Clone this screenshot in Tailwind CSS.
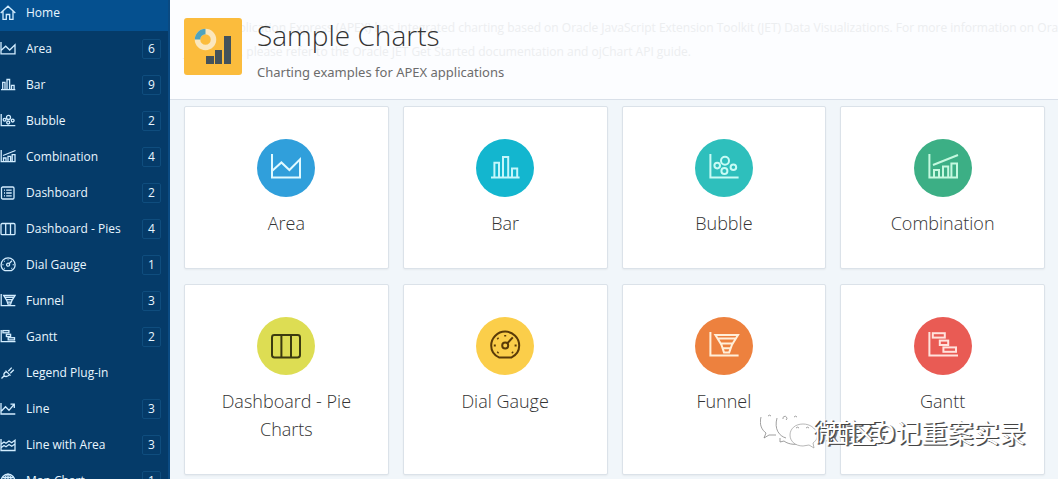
<!DOCTYPE html>
<html lang="en">
<head>
<meta charset="utf-8">
<title>Sample Charts</title>
<script src="https://cdn.jsdelivr.net/npm/@tailwindcss/browser@4"></script>
</head>
<body class="flex h-screen overflow-hidden bg-[#f1f6fa] font-['Open_Sans','Noto_Sans_CJK_SC',sans-serif] text-[#333]">

<!-- Icon set, drawn on a 16-unit grid -->
<svg class="hidden">
  <symbol id="home" viewBox="0 0 16 16"><path d="M.7 8 8 1.2 15.3 8M3 6.2v8.1h3.3V9.5h3.4v4.8H13V6.2"/></symbol>
  <symbol id="area" viewBox="0 0 16 16"><path d="M1 1v11.8h14V3.7L9.7 9l-4-3.8L1 9.5"/></symbol>
  <symbol id="bar" viewBox="0 0 16 16"><path d="M1 12.7h14.3M2.7 12.7V5.4H5v7.3M7 12.7V2.5h2.6v10.2M11.5 12.7V8.3h2.6v4.4"/></symbol>
  <symbol id="bubble" viewBox="0 0 16 16"><path d="M1.2 1v11.7h14.1"/><circle cx="4.6" cy="6.8" r="1.4"/><circle cx="8.5" cy="4.4" r="2"/><circle cx="12.7" cy="7.6" r="1.4"/><circle cx="8.2" cy="9.5" r="1.5"/></symbol>
  <symbol id="combo" viewBox="0 0 16 16"><path d="M1.2 1v11.7h14.3M3 6.5l12.5-5M3.5 12.7V9H6v3.7M8 12.7V7.3h2.6v5.4M12.2 12.7v-7H15v7"/></symbol>
  <symbol id="list" viewBox="0 0 16 16"><rect x="1.5" y="2" width="12.5" height="12" rx="1.2"/><path d="M4 5.2h1M6.2 5.2h5.5M4 8h1M6.2 8h5.5M4 10.8h1M6.2 10.8h5.5"/></symbol>
  <symbol id="columns" viewBox="0 0 16 16"><rect x="1" y="2.5" width="14" height="11.2" rx="1.2"/><path d="M5.7 2.5v11.2M10.5 2.5v11.2"/></symbol>
  <symbol id="gauge" viewBox="0 0 16 16"><path d="M5 13.7h6.3C14 12.4 15.1 10 15.1 7.8a7 7 0 0 0-14 0c0 2.5 1.4 4.8 3.9 5.9Z"/><circle cx="8.1" cy="7.7" r="1.5"/><path d="M9.2 6.6l2.7-2.9M8.1 2.5v.7M4.2 4l.5.5M2.9 7.3v1M13.3 7.3v1M4.2 11.5l.5-.5M12 11.5l-.5-.5"/></symbol>
  <symbol id="funnel" viewBox="0 0 16 16"><path d="M1.2 1v11.7h14.1M3.7 2.5H15L12 7.3l-1.4 3.9H8L6.7 7.3ZM5 4.3h8.8M6.6 6.7h5.6M7.4 9.1h3.9"/></symbol>
  <symbol id="gantt" viewBox="0 0 16 16"><path d="M1.2 1v11.7h14.3"/><rect x="2.9" y="1.6" width="6" height="2.2"/><rect x="6.4" y="5.3" width="4.2" height="2.2"/><rect x="8.2" y="8.7" width="6.3" height="2.2"/></symbol>
  <symbol id="plug" viewBox="0 0 16 16"><path d="M1.5 13.5l2.7-2.7M5.5 5.6l5 5M6.3 6.4C4 7.8 3.4 9.5 4.2 10.8c1.5 1.2 3.6.7 5.5-1.2M8.300 6.200l3.400-3.600M10.300 8.200l3.500-3.500"/></symbol>
  <symbol id="line" viewBox="0 0 16 16"><path d="M1 2v11h14.3M1.500 10l4-4.200 3.500 3.500L14 3.500M10.500 3.200H14.300V7"/></symbol>
  <symbol id="linearea" viewBox="0 0 16 16"><path d="M1 2v11.500h14V3.200l-3.300 2.500L9 4 6 6.300 4 5 1.300 7M1.300 10.500 4 8.500l2 1.300L9 7.500l2.700 1.800L15 7"/></symbol>
  <symbol id="globe" viewBox="0 0 16 16"><circle cx="8" cy="8" r="6.8"/><ellipse cx="8" cy="8" rx="3" ry="6.8"/><path d="M1.2 8h13.600M8 1.200v13.600M2.300 4.500h11.400"/></symbol>
</svg>

<nav aria-label="Main" class="w-[170px] shrink-0 overflow-hidden border-r-2 border-[#0a4a82] bg-[#053b69] text-xs text-[#e9f6ff] [&_svg]:size-4 [&_svg]:shrink-0 [&_svg]:fill-none [&_svg]:stroke-[#d3edff] [&_svg]:stroke-[1.3px] [&_a]:flex [&_a]:h-9 [&_a]:items-center [&_a]:gap-2.5 [&_a]:pr-[7px] [&_b]:ml-auto [&_b]:flex [&_b]:h-5 [&_b]:w-[19px] [&_b]:items-center [&_b]:justify-center [&_b]:rounded-xs [&_b]:border [&_b]:border-[#0f4d7e] [&_b]:font-normal">
  <a href="#" class="-mt-[5px] bg-[#05508f]"><svg><use href="#home"/></svg>Home</a>
  <a href="#"><svg><use href="#area"/></svg>Area<b>6</b></a>
  <a href="#"><svg><use href="#bar"/></svg>Bar<b>9</b></a>
  <a href="#"><svg><use href="#bubble"/></svg>Bubble<b>2</b></a>
  <a href="#"><svg><use href="#combo"/></svg>Combination<b>4</b></a>
  <a href="#"><svg><use href="#list"/></svg>Dashboard<b>2</b></a>
  <a href="#"><svg><use href="#columns"/></svg>Dashboard - Pies<b>4</b></a>
  <a href="#"><svg><use href="#gauge"/></svg>Dial Gauge<b>1</b></a>
  <a href="#"><svg><use href="#funnel"/></svg>Funnel<b>3</b></a>
  <a href="#"><svg><use href="#gantt"/></svg>Gantt<b>2</b></a>
  <a href="#"><svg><use href="#plug"/></svg>Legend Plug-in</a>
  <a href="#"><svg><use href="#line"/></svg>Line<b>3</b></a>
  <a href="#"><svg><use href="#linearea"/></svg>Line with Area<b>3</b></a>
  <a href="#"><svg><use href="#globe"/></svg>Map Chart<b>1</b></a>
</nav>

<div class="min-w-0 flex-1">
  <header class="relative overflow-hidden border-b border-[#d9e0e9] bg-[#fcfdff] px-3.5 pt-[18px] pb-[17px]">
    <!-- Faded introduction behind the title -->
    <p class="absolute top-4 left-3.5 text-xs leading-6 whitespace-nowrap text-[#eceef0]">Oracle Application Express (APEX) has integrated charting based on Oracle JavaScript Extension Toolkit (JET) Data Visualizations. For more information on Oracle<br>JET Charts, please refer to the Oracle JET Get Started documentation and ojChart API guide.</p>
    <div class="relative flex gap-[15px]">
      <svg class="h-[57px] w-[58px] shrink-0" viewBox="0 0 58 57">
        <rect width="58" height="57" rx="3" fill="#fbbc3d"/>
        <circle cx="21.500" cy="21.500" r="8" fill="none" stroke="#fbe7bd" stroke-width="5.500"/>
        <path d="M13.500 21.500a8 8 0 0 1 8-8" fill="none" stroke="#4fa3bd" stroke-width="5.500"/>
        <path d="M22 38h8v8h-8zM31 32h7v14h-7zM40 18h7v28h-7z" fill="#44525a"/>
      </svg>
      <div>
        <h1 class="text-[28px] leading-[34px] font-[350]">Sample Charts</h1>
        <p class="pt-2.5 font-['Noto_Sans',sans-serif] text-[13px] leading-5 text-[#6c6c6c]">Charting examples for APEX applications</p>
      </div>
    </div>
  </header>

  <main class="relative grid grid-cols-4 gap-x-3.5 gap-y-[15px] pt-1.5 pr-[13px] pl-3.5 text-center text-lg leading-7 font-[350] [&>a]:flex [&>a]:flex-col [&>a]:items-center [&>a]:gap-3 [&>a]:rounded-xs [&>a]:border [&>a]:border-[#dbe2e9] [&>a]:bg-white [&>a]:px-8 [&>a]:pt-8 [&>a]:pb-[31px] [&>a]:shadow-xs [&>a>i]:flex [&>a>i]:size-[58px] [&>a>i]:items-center [&>a>i]:justify-center [&>a>i]:rounded-full [&>a>i>svg]:size-8 [&>a>i>svg]:fill-none [&>a>i>svg]:stroke-current [&>a>i>svg]:stroke-1">
    <a href="#"><i class="bg-[#309fdb] text-[#e0faff]"><svg><use href="#area"/></svg></i>Area</a>
    <a href="#"><i class="bg-[#13b6cf] text-[#c4f6fb]"><svg><use href="#bar"/></svg></i>Bar</a>
    <a href="#"><i class="bg-[#2ebfbc] text-[#c8fbf5]"><svg><use href="#bubble"/></svg></i>Bubble</a>
    <a href="#"><i class="bg-[#3caf85] text-[#c4f9df]"><svg><use href="#combo"/></svg></i>Combination</a>
    <a href="#"><i class="bg-[#dddd53] text-[#3c3b10]"><svg><use href="#columns"/></svg></i>Dashboard - Pie Charts</a>
    <a href="#"><i class="bg-[#fbce4a] text-[#5a3b08]"><svg><use href="#gauge"/></svg></i>Dial Gauge</a>
    <a href="#"><i class="bg-[#ed813e] text-[#ffefd9]"><svg><use href="#funnel"/></svg></i>Funnel</a>
    <a href="#"><i class="bg-[#e95b54] text-[#ffe2dc]"><svg><use href="#gantt"/></svg></i>Gantt</a>

    <!-- Overlapping account watermarks -->
    <div class="pointer-events-none absolute top-[312px] right-[34px] h-10 w-[264px] text-left font-['Noto_Sans_CJK_SC',sans-serif] text-[25px] leading-9 font-normal whitespace-nowrap text-white [text-shadow:1px_1px_0_#444,2px_1px_0_#777]">
      <svg class="absolute top-0 left-0 h-10 w-[60px] fill-none stroke-[#777] stroke-[0.7]" viewBox="0 0 60 40">
        <path d="M1 5C-1 13 2 18 6 21l-2 5 5-3h7"/>
        <path d="M17 6c-3 11 2 18 9 20M20 26l0 4 4-1c5 4 13 4 18 2"/>
        <path d="M43 12c-8 0-13 5-13 11s5 11 13 11l6-1 5 3-1-5c4-3 5-6 4-10-2-5-7-9-14-9Z" fill="#fff" stroke="#999"/>
        <path d="M8 4a2 2 0 0 1 3 0M23 7a2 2 0 1 1 3 1M34 5a2 2 0 0 1 3 0M36 16a2 2 0 0 1 3 0M46 16a2 2 0 0 1 3 0"/>
      </svg>
      <span class="absolute top-0 left-[53px]">微信号:</span>
      <span class="absolute top-0.5 left-16 text-[26px]">西区O记重案实录</span>
    </div>
  </main>
</div>
</body>
</html>
